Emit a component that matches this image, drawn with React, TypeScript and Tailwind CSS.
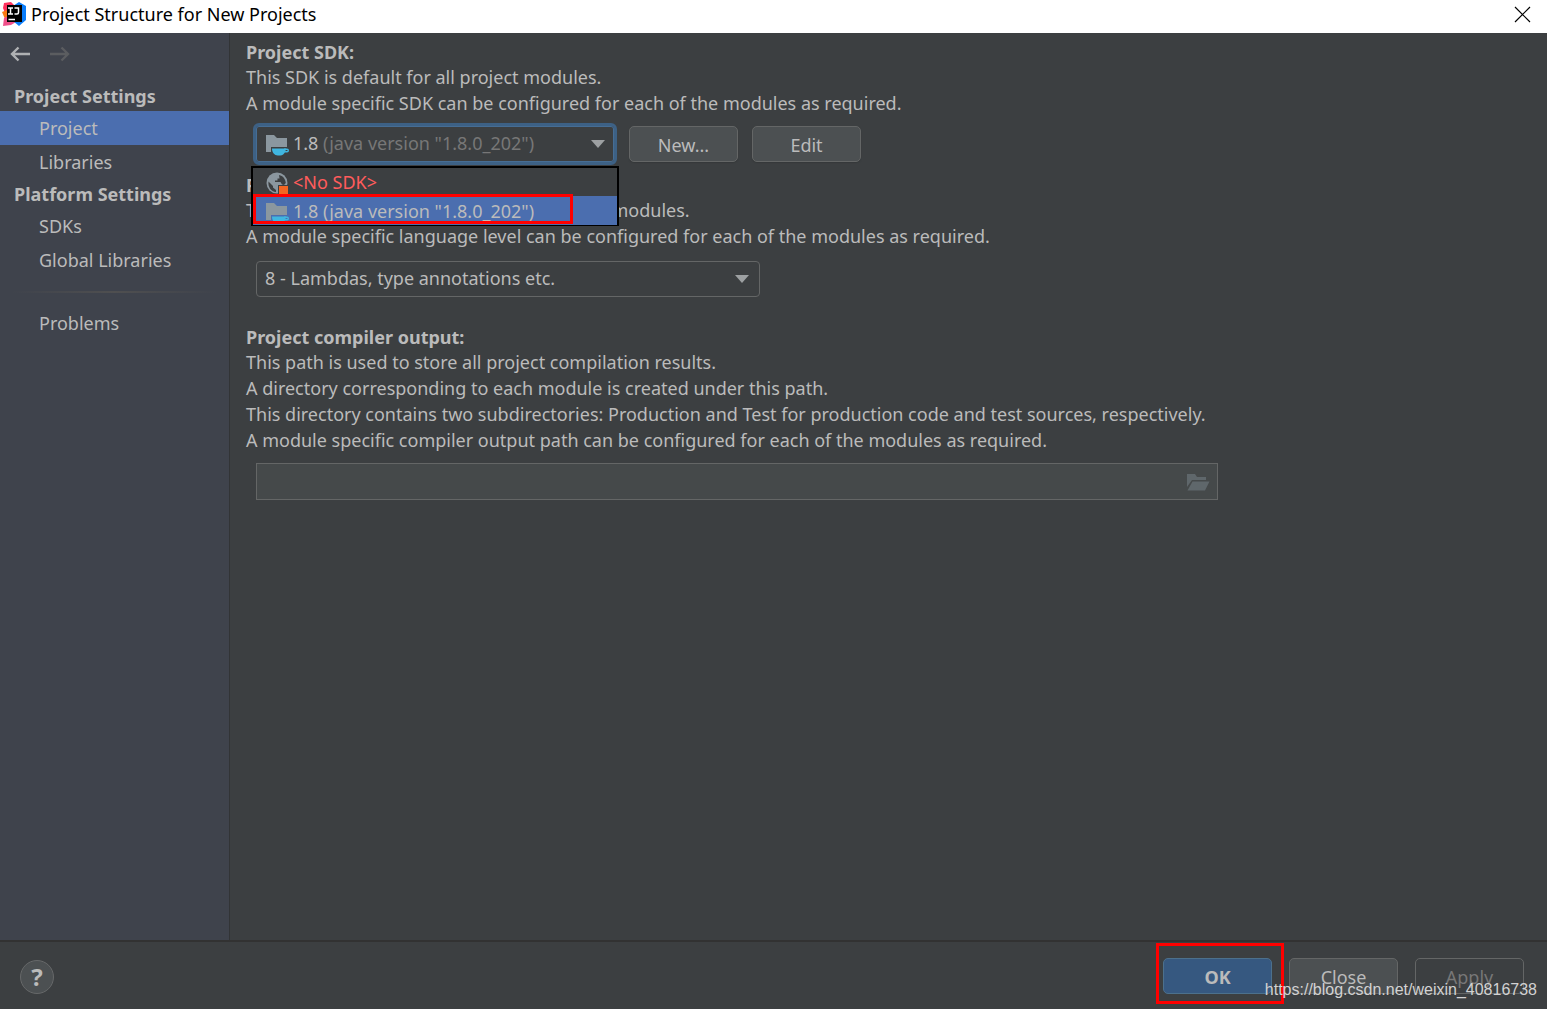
import { useState } from 'react';
import type { ReactNode } from 'react';
import clsx from 'clsx';

const navGroups = [
  { title: 'Project Settings', items: ['Project', 'Libraries'] },
  { title: 'Platform Settings', items: ['SDKs', 'Global Libraries'] },
];

const sdkVersion = '1.8 (java version "1.8.0_202")';

function IdeaLogo() {
  return (
    <svg width="26" height="26" viewBox="0 0 26 26" aria-hidden="true">
      <path d="M2 2 L9 1 L14 6 L10 14 L3 12 L1 7 Z" fill="#fe315d" />
      <path d="M0 11 L5 9 L8 18 L3 18 Z" fill="#f97a12" />
      <path d="M2 17 L6 15 L14 21 L9 24 L1 25 Z" fill="#f0508a" />
      <path d="M11 5 L17 1 L24 5 L24 19 L17 25 L11 20 Z" fill="#087cfa" />
      <path d="M5 4h15v17H5z" fill="#000000" />
      <path
        d="M6 7h5M8.500 7v6M6 13h5M12.500 7h4v4.500q0 1.500-1.500 1.500h-2.500M6.500 18.500H13"
        stroke="#ffffff"
        strokeWidth="1.500"
        fill="none"
      />
    </svg>
  );
}

function ArrowIcon({ flip = false }: { flip?: boolean }) {
  return (
    <svg width="20" height="16" viewBox="0 0 20 16" fill="none" stroke="currentColor" strokeWidth="2.400" aria-hidden="true">
      {flip ? <path d="M0 8h18M11.500 1.500 18 8l-6.500 6.500" /> : <path d="M20 8H2M8.500 1.500 2 8l6.500 6.500" />}
    </svg>
  );
}

function SdkIcon() {
  return (
    <svg width="24" height="23" viewBox="0 0 24 23" className="shrink-0" aria-hidden="true">
      <path d="M1 2h8l3 3h10v9H6v5H1z" fill="#8b979f" />
      <path d="M7 15.500h14c0 1-.2 2-.8 3-1 2.500-2.700 4-5 4h-2.400C9.500 22.500 7 19.500 7 15.500z" fill="#40b6e0" />
      <path d="M19 16.300h3q1.300 0 1.300 1.200t-1.300 1.300h-3" stroke="#40b6e0" strokeWidth="1.400" fill="none" />
    </svg>
  );
}

function NoSdkIcon() {
  return (
    <svg width="24" height="23" viewBox="0 0 24 23" className="shrink-0" aria-hidden="true">
      <circle cx="12" cy="12" r="10.500" fill="#8b979f" />
      {/* Oceans */}
      <path d="M3.500 10.500 8 15v1.500l3 2.500v2C6 20.500 2.800 16 3.500 10.500z" fill="#3c3f41" />
      <path d="M14 4c4 .8 6.500 4 6.800 8l-1.800 2-2-.5-1.500-2.500H10V9.500h2.500V7.500h2z" fill="#3c3f41" />
      <path d="M13 14h11v9H13z" fill="#3c3f41" />
      <path d="M14 15h9v8h-9z" fill="#f26522" />
    </svg>
  );
}

function FolderIcon() {
  return (
    <svg width="24" height="18" viewBox="0 0 24 18" aria-hidden="true">
      <path d="M1 1h8l2 3h9v3H6L1 14z" fill="#5f676b" />
      <path d="M6.500 8.500H23.500L19 17.500H1.500z" fill="#5f676b" />
    </svg>
  );
}

function Caret() {
  return (
    <svg width="14" height="8" viewBox="0 0 14 8" className="shrink-0" aria-hidden="true">
      <path d="M0 0h14L7 8z" fill="#9da0a2" />
    </svg>
  );
}

function Button({ children, variant = 'normal' }: { children: ReactNode; variant?: 'normal' | 'primary' | 'disabled' }) {
  return (
    <button
      type="button"
      disabled={variant === 'disabled'}
      className={clsx(
        'h-9 w-[109px] shrink-0 rounded-[5px] border pt-px leading-6',
        variant === 'normal' && 'border-[#646666] bg-[#4c5052] shadow-[0_1px_1px_#35383a]',
        variant === 'primary' && 'border-[#4c708c] bg-[#365880] font-bold',
        variant === 'disabled' && 'border-[#646666] text-[#777777]'
      )}
    >
      {children}
    </button>
  );
}

function Section({ title, lines, children }: { title: string; lines: string[]; children: ReactNode }) {
  return (
    <section>
      <h2 className="leading-6 font-bold">{title}</h2>
      {lines.map((line) => (
        <p key={line} className="leading-[26px]">
          {line}
        </p>
      ))}
      {children}
    </section>
  );
}

function SdkPicker() {
  const [sdk, setSdk] = useState(sdkVersion);

  return (
    <div className="relative w-[364px] shrink-0">
      <div className="flex h-[42px] items-center rounded-md border-3 border-[#3d6185] px-[9px] ring-1 ring-[#466d94] ring-inset">
        <SdkIcon />
        <span className="ml-1 grow pb-0.5 whitespace-nowrap text-[#777777]">
          <span className="text-[#bbbbbb]">1.8</span> (java version "1.8.0_202")
        </span>
        <Caret />
      </div>
      <select
        aria-label="Project SDK"
        value={sdk}
        onChange={(e) => setSdk(e.target.value)}
        className="absolute inset-0 opacity-0"
      >
        <option>&lt;No SDK&gt;</option>
        <option>{sdkVersion}</option>
      </select>

      {/* Open list */}
      <ul className="absolute top-[43px] -left-0.5 z-10 h-[60px] w-[368px] border-2 border-b border-black bg-[#3c3f41]">
        <li className="flex h-7 items-center gap-1 pl-3 text-[#ff5c5c]">
          <NoSdkIcon />
          &lt;No SDK&gt;
        </li>
        <li className="flex h-[29px] items-start bg-[#4b6eaf] pl-3">
          <span className="flex h-[25px] items-start gap-1 overflow-hidden pt-[5px]">
            <SdkIcon />
            <span className="-mt-0.5 leading-6">{sdkVersion}</span>
          </span>
        </li>
        <li aria-hidden="true" className="absolute top-[26px] left-0 h-[30px] w-80 border-3 border-[#ff0000]" />
      </ul>
    </div>
  );
}

export default function App() {
  const [active, setActive] = useState('Project');

  const navItem = (label: string) => (
    <button
      key={label}
      type="button"
      onClick={() => setActive(label)}
      className={clsx('block h-[34px] w-full pl-[39px] text-left', active === label && 'bg-[#4b6eaf]')}
    >
      {label}
    </button>
  );

  return (
    <div className="relative flex min-h-screen flex-col bg-[#3c3f41] font-['Noto_Sans',sans-serif] text-lg text-[#bbbbbb]">
      {/* Title bar */}
      <header className="flex h-[33px] items-start bg-white pt-px pr-4 pl-0.5 text-black">
        <IdeaLogo />
        <h1 className="ml-[3px] grow leading-[26px]">Project Structure for New Projects</h1>
        <button type="button" aria-label="Close window" className="pt-[5px]">
          <svg width="17" height="17" viewBox="0 0 17 17" stroke="#000000" strokeWidth="1.200">
            <path d="M1 1l15 15M16 1 1 16" />
          </svg>
        </button>
      </header>

      <div className="flex grow">
        {/* Sidebar */}
        <aside className="w-[230px] shrink-0 border-r border-[#323436] bg-[#3f434c]">
          <div className="flex h-12 items-start gap-5 pt-[13px] pl-[10px]">
            <button type="button" aria-label="Back" className="text-[#afb1b3]">
              <ArrowIcon />
            </button>
            <button type="button" aria-label="Forward" disabled className="text-[#5b5d60]">
              <ArrowIcon flip />
            </button>
          </div>
          <nav>
            {navGroups.map((group) => (
              <div key={group.title}>
                <h2 className="h-[30px] pl-[14px] leading-[30px] font-bold">{group.title}</h2>
                {group.items.map(navItem)}
              </div>
            ))}
            <div className="mx-3 mt-[14px] mb-[13px] h-0.5 bg-linear-to-r from-transparent via-[#4f4f50] to-transparent" />
            {navItem('Problems')}
          </nav>
        </aside>

        {/* Content */}
        <main className="min-w-0 grow pt-[7px] pl-4">
          <Section
            title="Project SDK:"
            lines={[
              'This SDK is default for all project modules.',
              'A module specific SDK can be configured for each of the modules as required.',
            ]}
          >
            <div className="mt-[7px] flex items-center pl-[7px]">
              <SdkPicker />
              <div className="ml-3 flex gap-[14px]">
                <Button>New...</Button>
                <Button>Edit</Button>
              </div>
            </div>
          </Section>

          <div className="mt-2">
            <Section
              title="Project language level:"
              lines={[
                'This language level is default for all project modules.',
                'A module specific language level can be configured for each of the modules as required.',
              ]}
            >
              <div className="mt-3 ml-[10px] flex h-9 w-[504px] items-center rounded-[4px] border border-[#646666] pr-[10px]">
                <select aria-label="Project language level" className="grow appearance-none bg-transparent pb-0.5 pl-2 leading-6 outline-none">
                  <option>8 - Lambdas, type annotations etc.</option>
                </select>
                <Caret />
              </div>
            </Section>
          </div>

          <div className="mt-7">
            <Section
              title="Project compiler output:"
              lines={[
                'This path is used to store all project compilation results.',
                'A directory corresponding to each module is created under this path.',
                'This directory contains two subdirectories: Production and Test for production code and test sources, respectively.',
                'A module specific compiler output path can be configured for each of the modules as required.',
              ]}
            >
              <div className="mt-[10px] ml-[10px] flex h-[37px] max-w-[962px] items-center border border-[#646666] bg-[#45494a] pr-[7px]">
                <input type="text" aria-label="Project compiler output" className="min-w-0 grow bg-transparent px-2 outline-none" />
                <button type="button" aria-label="Browse">
                  <FolderIcon />
                </button>
              </div>
            </Section>
          </div>
        </main>
      </div>

      {/* Footer */}
      <footer className="flex h-[69px] items-start border-t-2 border-[#323232] pr-[23px] pl-5">
        <button
          type="button"
          aria-label="Help"
          className="mt-[18px] h-[34px] w-[34px] rounded-full border border-[#666869] bg-[#4c5052] text-2xl leading-8 font-bold"
        >
          ?
        </button>
        <div className="ml-auto flex items-start">
          <div className="mt-px mr-[5px] border-3 border-[#ff0000] pt-3 pr-[9px] pb-[7px] pl-1">
            <Button variant="primary">OK</Button>
          </div>
          <div className="mt-4 flex gap-[17px]">
            <Button>Close</Button>
            <Button variant="disabled">Apply</Button>
          </div>
        </div>
      </footer>

      <span className="absolute right-[10px] bottom-[9px] font-['Liberation_Sans',Arial,sans-serif] text-base leading-5 text-[#d2d2d2]">
        https://blog.csdn.net/weixin_40816738
      </span>
    </div>
  );
}
